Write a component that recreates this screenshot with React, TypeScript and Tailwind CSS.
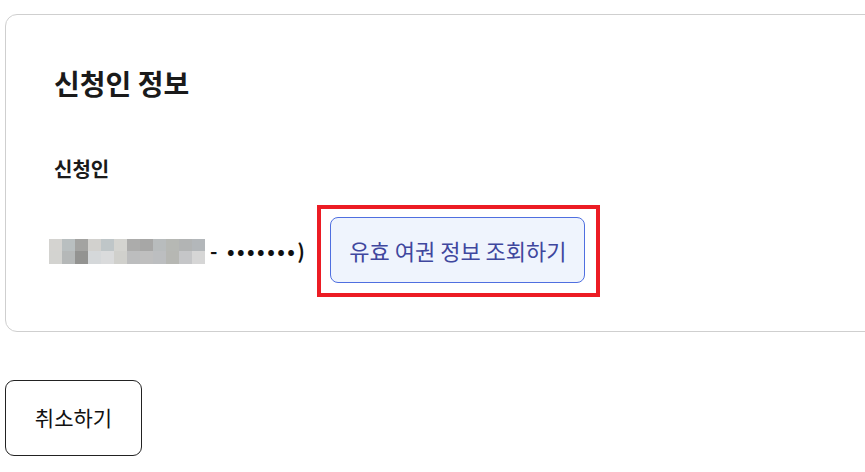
const blurRows = [
  ["#d4d3d0", "#b9bfc0", "#a3a3a1", "#d2d1ce", "#bfc6c8", "#d4d4d0", "#acacab", "#a7a7a6", "#b8bcbd", "#b6b8b4", "#b2b4b4", "#b3b7ba"],
  ["#d3d3d0", "#b5b8b8", "#939391", "#d5d8da", "#dadbdc", "#d0d0cc", "#bcbdbe", "#bfbfbf", "#bcbec0", "#b6b7b3", "#c5c6c8", "#d6d6d6"],
];

const BlurredName = () => {
  return (
    <div className="flex flex-col">
      {blurRows.map((row, i) => (
        <div key={i} className="flex">
          {row.map((c, j) => (
            <div key={j} className="w-[13px] h-[12.5px]" style={{ backgroundColor: c }} />
          ))}
        </div>
      ))}
    </div>
  );
};

export default function App() {
  return (
    <div
      className="w-[865px] h-[472px] overflow-hidden bg-white pl-[5px] pt-[14px]"
      style={{ fontFamily: '"Noto Sans CJK KR", "Noto Sans", sans-serif' }}
    >
      <section className="w-[900px] border border-[#cfcfcf] rounded-[12px] pl-[48px] pt-[50px] pb-[34px]">
        <h2 className="text-[28px] leading-[36px] font-bold text-[#1a1a1a]">신청인 정보</h2>
        <h3 className="mt-[54px] text-[20px] leading-[28px] font-bold text-[#1a1a1a]">신청인</h3>
        <div className="mt-[22px] flex items-center">
          <div className="-ml-[5px] flex items-center">
            <BlurredName />
            <span className="ml-[5px] text-[20px] font-bold text-[#111] tracking-[2.5px]">- •••••••)</span>
          </div>
          <div className="ml-[10px] border-4 border-[#ec1c24] pl-[9px] pr-[11px] pt-[8px] pb-[10px]">
            <button className="w-[255px] h-[66px] rounded-[8px] border border-[#4f6fe0] bg-[#eff4fd] text-[22px] text-[#3f479e]">
              유효 여권 정보 조회하기
            </button>
          </div>
        </div>
      </section>
      <button className="mt-[48px] w-[137px] h-[76px] rounded-[9px] border border-[#222] bg-white text-[21px] text-[#111]">
        취소하기
      </button>
    </div>
  );
}
